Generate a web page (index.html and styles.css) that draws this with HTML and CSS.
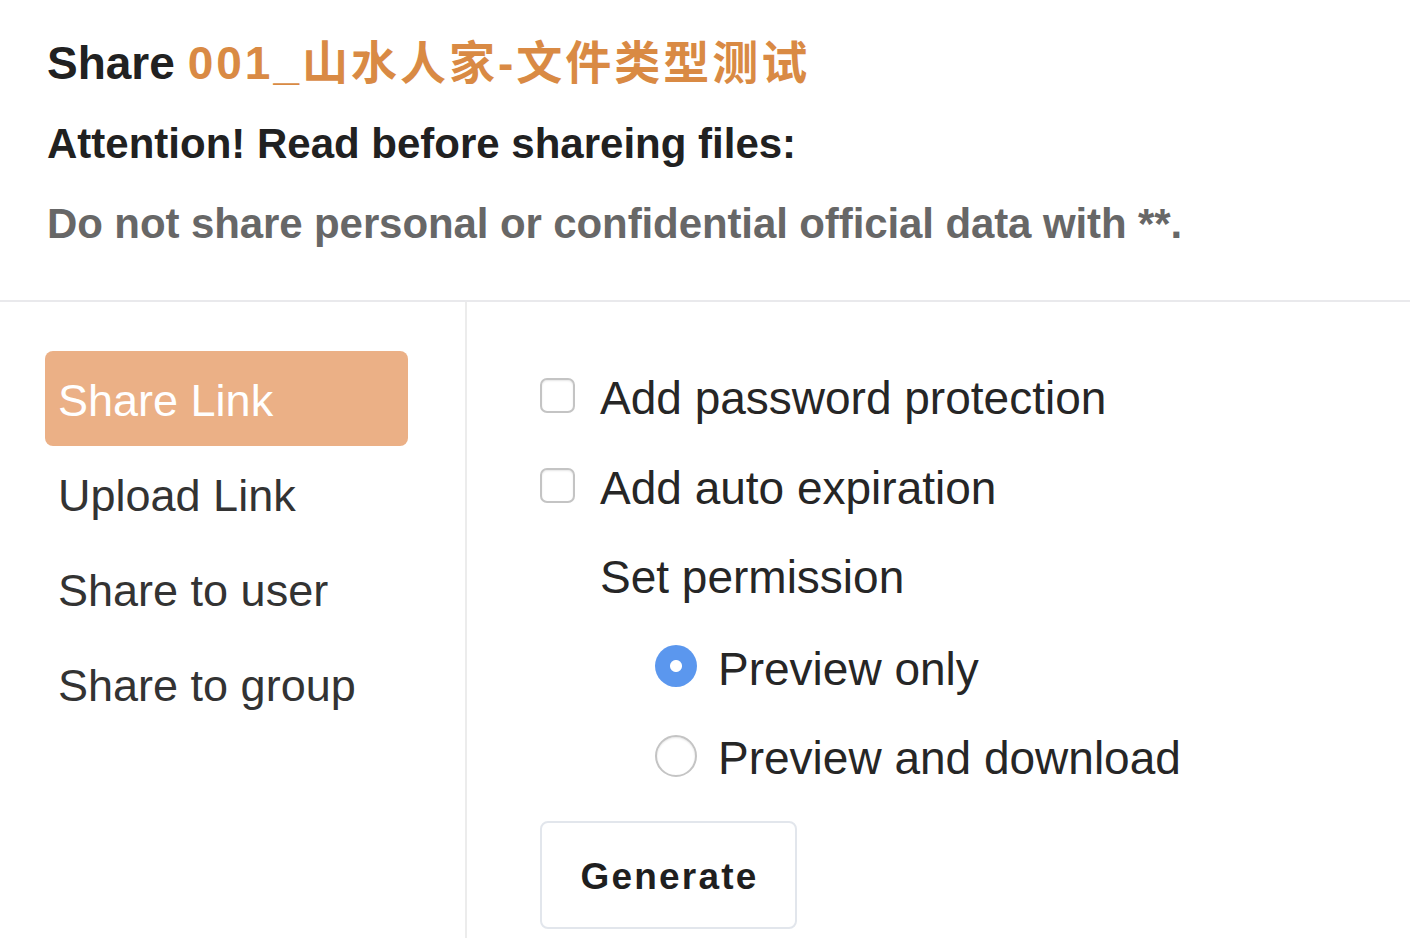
FILE: index.html
```html
<!DOCTYPE html>
<html lang="en">
<head>
<meta charset="utf-8">
<title>Share</title>
<link rel="stylesheet" href="styles.css">
</head>
<body>
<div class="dialog">
  <header class="dialog-head">
    <h1 class="title">Share <span class="file-name">001_山水人家-文件类型测试</span></h1>
    <p class="attention">Attention! Read before shareing files:</p>
    <p class="notice">Do not share personal or confidential official data with **.</p>
  </header>
  <div class="dialog-body">
    <nav class="side-nav">
      <a class="nav-item active">Share Link</a>
      <a class="nav-item">Upload Link</a>
      <a class="nav-item">Share to user</a>
      <a class="nav-item">Share to group</a>
    </nav>
    <section class="panel">
      <label class="row"><input type="checkbox" class="checkbox"><span>Add password protection</span></label>
      <label class="row"><input type="checkbox" class="checkbox"><span>Add auto expiration</span></label>
      <div class="row row-indent">Set permission</div>
      <label class="row row-radio"><input type="radio" name="perm" class="radio" checked><span>Preview only</span></label>
      <label class="row row-radio"><input type="radio" name="perm" class="radio"><span>Preview and download</span></label>
      <button class="btn-generate" type="button">Generate</button>
    </section>
  </div>
</div>
</body>
</html>
```
FILE: styles.css
```css
* { box-sizing: border-box; }
html, body { margin: 0; padding: 0; background: #fff; }
body {
  font-family: "Liberation Sans", Arial, "Noto Sans CJK SC", sans-serif;
  color: #222;
  overflow: hidden;
}
.dialog { width: 1410px; height: 938px; }
.dialog-head {
  padding: 37px 0 51px 47px;
  border-bottom: 2px solid #e9e9ec;
}
.title {
  margin: 0;
  font-size: 46px;
  line-height: 52px;
  font-weight: 700;
  color: #212121;
  white-space: nowrap;
}
.file-name {
  color: #d98a44;
  letter-spacing: 3px;
  font-family: "Liberation Sans", "Noto Sans CJK SC", sans-serif;
}
.attention {
  margin: 30px 0 0;
  font-size: 42px;
  line-height: 50px;
  font-weight: 700;
  color: #212121;
}
.notice {
  margin: 30px 0 0;
  font-size: 42px;
  line-height: 50px;
  font-weight: 700;
  color: #676767;
  letter-spacing: -0.1px;
}
.dialog-body { display: flex; height: 636px; }
.side-nav {
  width: 467px;
  flex: none;
  padding: 49px 57px 0 45px;
  border-right: 2px solid #ececec;
  display: flex;
  flex-direction: column;
}
.nav-item {
  display: block;
  height: 95px;
  padding: 4px 0 0 13px;
  line-height: 91px;
  font-size: 45px;
  color: #333;
  border-radius: 8px;
  white-space: nowrap;
}
.nav-item.active { background: #ebb086; color: #fff; }
.panel {
  flex: 1;
  padding: 49px 0 0 73px;
  display: flex;
  flex-direction: column;
  align-items: flex-start;
}
.row {
  height: 89.5px;
  display: flex;
  align-items: center;
  font-size: 46px;
  color: #262626;
  white-space: nowrap;
}
.row-indent { padding-left: 60px; padding-top: 4px; }
.row-radio { padding-left: 115px; padding-top: 4px; }
.row > span { padding-top: 5px; }
.checkbox {
  appearance: none;
  -webkit-appearance: none;
  width: 35px;
  height: 35px;
  margin: 0 25px 0 0;
  border: 2px solid #c4c4c4;
  border-radius: 7px;
  background: #fff;
  box-shadow: inset 0 1px 2px rgba(0,0,0,0.1);
  flex: none;
}
.radio {
  appearance: none;
  -webkit-appearance: none;
  width: 42px;
  height: 42px;
  margin: 0 21px 0 0;
  border: 2px solid #c4c4c4;
  border-radius: 50%;
  background: #fff;
  box-shadow: inset 0 1px 2px rgba(0,0,0,0.1);
  flex: none;
}
.radio:checked {
  border: none;
  background: radial-gradient(circle, #fff 0 5.5px, #5b97ee 6.5px);
  box-shadow: none;
}
.btn-generate {
  margin-top: 22px;
  width: 257px;
  height: 108px;
  border: 2px solid #e2e6ec;
  border-radius: 8px;
  background: #fff;
  font-family: "Liberation Sans", Arial, sans-serif;
  font-size: 37px;
  font-weight: 700;
  letter-spacing: 2.2px;
  color: #1f1f1f;
  padding: 4px 0 0 2px;
}
```
